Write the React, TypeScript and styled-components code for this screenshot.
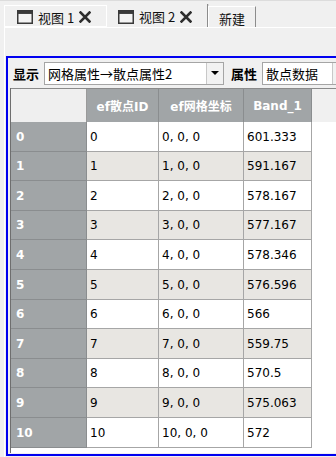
import styled, { createGlobalStyle } from "styled-components";

const GlobalStyle = createGlobalStyle`
  html, body {
    margin: 0;
    padding: 0;
    background: #f0f0f0;
    overflow: hidden;
  }
  body {
    font-family: "Noto Sans CJK SC", "DejaVu Sans", sans-serif;
    width: 336px;
    height: 457px;
  }
`;

const CJK = `"Noto Sans CJK SC", "DejaVu Sans", sans-serif`;
const CELL = `"DejaVu Sans", "Noto Sans CJK SC", sans-serif`;

const rows = [
  ["0", "0, 0, 0", "601.333"],
  ["1", "1, 0, 0", "591.167"],
  ["2", "2, 0, 0", "578.167"],
  ["3", "3, 0, 0", "577.167"],
  ["4", "4, 0, 0", "578.346"],
  ["5", "5, 0, 0", "576.596"],
  ["6", "6, 0, 0", "566"],
  ["7", "7, 0, 0", "559.75"],
  ["8", "8, 0, 0", "570.5"],
  ["9", "9, 0, 0", "575.063"],
  ["10", "10, 0, 0", "572"],
];

const colWidths = [76, 72, 85, 68];
const rowHeights = [30, 29, 30, 29, 30, 30, 29, 30, 29, 30, 30];

const Page = styled.div`
  display: flex;
  flex-direction: column;
  width: 336px;
  height: 457px;
  border-top: 1px solid #dcdcdc;
  box-sizing: border-box;
  overflow: hidden;
`;

const TabBar = styled.div`
  display: flex;
  align-items: flex-end;
  height: 26px;
  padding-left: 4px;
`;

const Tab = styled.div<{ $active?: boolean; $top: number; $w: number }>`
  box-sizing: border-box;
  width: ${p => p.$w}px;
  height: ${p => 26 - p.$top}px;
  display: flex;
  align-items: center;
  gap: 5px;
  padding-left: ${p => (p.$active ? 11 : 12)}px;
  padding-top: 2px;
  font-family: ${CJK};
  font-size: 13px;
  color: #111;
  background: #f0f0f0;
  border-top: ${p => (p.$active ? "none" : "1px solid #ffffff")};
  border-left: ${p => (p.$active ? "none" : "1px solid #ffffff")};
  border-right: 1px solid ${p => (p.$active ? "#8c8c8c" : "#ffffff")};
  border-bottom: ${p => (p.$active ? "none" : "1px solid #ffffff")};
  box-shadow: ${p => (p.$active ? "1px 0 0 #d8d8d8" : "none")};
`;

const NewTab = styled(Tab)`
  justify-content: center;
  padding-left: 0;
  border-right: 1px solid #8c8c8c;
  border-bottom: none;
`;

const TabLabel = styled.span`
  line-height: 1;
  white-space: nowrap;
`;

const Panel = styled.div`
  flex: 1;
  margin-left: 4px;
  border-left: 1px solid #ffffff;
  border-top: 1px solid #ffffff;
  padding-top: 28px;
  padding-left: 1px;
`;

const Frame = styled.div`
  box-sizing: border-box;
  height: 400px;
  border: 2px solid #0000f0;
  border-right: none;
  display: flex;
  flex-direction: column;
`;

const Toolbar = styled.div`
  height: 30px;
  display: flex;
  align-items: center;
  padding-left: 5px;
`;

const Label = styled.span`
  font-family: ${CJK};
  font-weight: 700;
  font-size: 13px;
  color: #000;
  margin-right: 5px;
  white-space: nowrap;
  flex-shrink: 0;
`;

const Combo = styled.div<{ $w: number }>`
  box-sizing: border-box;
  width: ${p => p.$w}px;
  min-width: ${p => p.$w}px;
  height: 23px;
  border: 1px solid #a5a5a5;
  background: #ffffff;
  display: flex;
  align-items: center;
  margin-right: 7px;
  flex-shrink: 0;
`;

const ComboText = styled.span`
  flex: 1;
  padding-left: 3px;
  font-family: ${CJK};
  font-size: 13px;
  color: #000;
  white-space: nowrap;
  overflow: hidden;
`;

const DropButton = styled.div`
  box-sizing: border-box;
  width: 17px;
  height: 21px;
  border-left: 1px solid #c8c8c8;
  background: #f2f2f2;
  display: flex;
  align-items: center;
  justify-content: center;
  flex-shrink: 0;
`;

const Arrow = styled.div`
  width: 0;
  height: 0;
  border-left: 4px solid transparent;
  border-right: 4px solid transparent;
  border-top: 4px solid #000;
`;

const Grid = styled.div`
  flex: 1;
  margin-left: 2px;
  overflow: hidden;
  background: #ffffff;
  border-left: 1px solid #6e6e6e;
  margin-bottom: 1px;
`;

const HeaderRow = styled.div`
  display: flex;
  height: 34px;
  background: #f0f0f0;
  border-top: 1px solid #8a8a8a;
  box-sizing: border-box;
`;

const Corner = styled.div<{ $w: number }>`
  box-sizing: border-box;
  width: ${p => p.$w}px;
  background: #efefef;
  border-right: 1px solid #9a9a9a;
`;

const HeadCell = styled.div<{ $w: number }>`
  box-sizing: border-box;
  width: ${p => p.$w}px;
  background: #a1a5a7;
  border-right: 1px solid #8a8d8f;
  display: flex;
  align-items: center;
  justify-content: center;
  font-family: ${CELL};
  font-weight: 700;
  font-size: 12px;
  color: #ffffff;
  white-space: nowrap;
`;

const Row = styled.div<{ $h: number }>`
  display: flex;
  height: ${p => p.$h}px;
`;

const RowHead = styled.div<{ $w: number }>`
  box-sizing: border-box;
  width: ${p => p.$w}px;
  background: #a1a5a7;
  border-bottom: 1px solid #8a8d8f;
  border-right: 1px solid #8a8d8f;
  display: flex;
  align-items: center;
  padding-left: 5px;
  font-family: ${CELL};
  font-weight: 700;
  font-size: 12px;
  color: #ffffff;
`;

const Cell = styled.div<{ $w: number; $odd: boolean }>`
  box-sizing: border-box;
  width: ${p => p.$w}px;
  background: ${p => (p.$odd ? "#e8e6e2" : "#ffffff")};
  border-bottom: 1px solid #a6a6a6;
  border-right: 1px solid #a6a6a6;
  display: flex;
  align-items: center;
  padding-left: 3px;
  font-family: ${CELL};
  font-size: 12px;
  color: #000;
  white-space: nowrap;
`;

const WindowIcon = () => (
  <svg width="16" height="14" viewBox="0 0 16 14">
    <rect x="0.75" y="0.75" width="14.5" height="12.5" fill="#f4f4f4" stroke="#3a3a3a" strokeWidth="1.5" />
    <rect x="0.75" y="0.75" width="14.5" height="3.2" fill="#3a3a3a" />
  </svg>
);

const CloseIcon = () => (
  <svg width="12" height="12" viewBox="0 0 12 12">
    <path d="M1.5 1.5 L10.5 10.5 M10.5 1.5 L1.5 10.5" stroke="#2e2e2e" strokeWidth="2.6" strokeLinecap="square" />
  </svg>
);

export default function App() {
  return (
    <Page>
      <GlobalStyle />
      <TabBar>
        <Tab $top={4} $w={103}>
          <WindowIcon />
          <TabLabel>视图 1</TabLabel>
          <CloseIcon />
        </Tab>
        <Tab $active $top={3} $w={101}>
          <WindowIcon />
          <TabLabel>视图 2</TabLabel>
          <CloseIcon />
        </Tab>
        <NewTab $top={5} $w={48}>
          <TabLabel>新建</TabLabel>
        </NewTab>
      </TabBar>
      <Panel>
        <Frame>
          <Toolbar>
            <Label>显示</Label>
            <Combo $w={180}>
              <ComboText>网格属性→散点属性2</ComboText>
              <DropButton>
                <Arrow />
              </DropButton>
            </Combo>
            <Label>属性</Label>
            <Combo $w={88}>
              <ComboText>散点数据</ComboText>
              <DropButton>
                <Arrow />
              </DropButton>
            </Combo>
          </Toolbar>
          <Grid>
            <HeaderRow>
              <Corner $w={colWidths[0]} />
              <HeadCell $w={colWidths[1]}>ef散点ID</HeadCell>
              <HeadCell $w={colWidths[2]}>ef网格坐标</HeadCell>
              <HeadCell $w={colWidths[3]}>Band_1</HeadCell>
            </HeaderRow>
            {rows.map((r, i) => (
              <Row key={i} $h={rowHeights[i]}>
                <RowHead $w={colWidths[0]}>{i}</RowHead>
                {r.map((v, j) => (
                  <Cell key={j} $w={colWidths[j + 1]} $odd={i % 2 === 1}>
                    {v}
                  </Cell>
                ))}
              </Row>
            ))}
          </Grid>
        </Frame>
      </Panel>
    </Page>
  );
}
